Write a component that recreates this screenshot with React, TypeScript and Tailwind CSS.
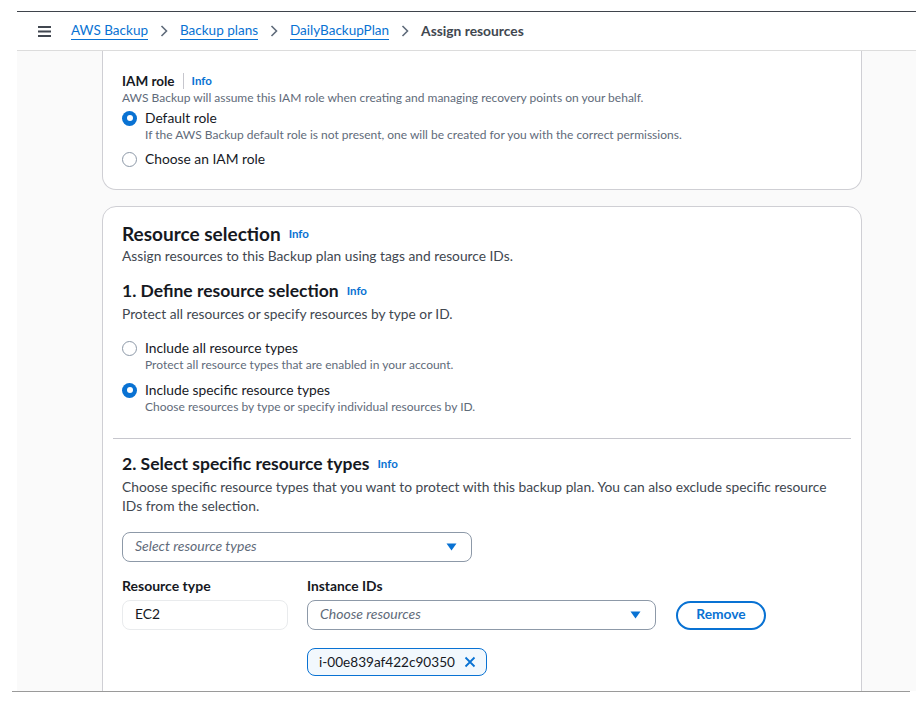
import React from 'react';

const blue = 'text-[#0972d3]';

function Info({ sep = false }: { sep?: boolean }) {
  return (
    <span className="inline-flex items-center">
      {sep && <span className="mx-[8px] block h-[16px] w-px bg-[#c6c6cd]" />}
      <span className={`text-[11.5px] font-bold ${blue} ${sep ? '' : 'ml-[8px]'}`}>Info</span>
    </span>
  );
}

function Radio({ on }: { on: boolean }) {
  if (on) {
    return (
      <span className="flex h-[15px] w-[15px] shrink-0 items-center justify-center rounded-full bg-[#0972d3]">
        <span className="block h-[6px] w-[6px] rounded-full bg-white" />
      </span>
    );
  }
  return <span className="block h-[15px] w-[15px] shrink-0 rounded-full border-[1.5px] border-[#8d99a8] bg-white" />;
}

function Caret() {
  return (
    <svg width="11" height="8" viewBox="0 0 11 8">
      <path d="M0.5 0.5 L10.5 0.5 L5.5 7.5 Z" fill="#0972d3" />
    </svg>
  );
}

function Chevron() {
  return (
    <svg width="8" height="12" viewBox="0 0 8 12" className="mx-[12px]">
      <path d="M1.5 1 L6.5 6 L1.5 11" fill="none" stroke="#5f6b7a" strokeWidth="1.6" />
    </svg>
  );
}

function Crumb({ label }: { label: string }) {
  return (
    <span className={`${blue} border-b border-[#0972d3] leading-[17px] text-[13.5px]`}>{label}</span>
  );
}

function RadioOption({ on, label, desc, className = '' }: { on: boolean; label: string; desc?: string; className?: string }) {
  return (
    <div className={className}>
      <div className="flex h-[18px] items-center">
        <span className="mr-[8px] block">
          <Radio on={on} />
        </span>
        <span className="text-[13.8px] leading-[18px] text-[#16191f]">{label}</span>
      </div>
      {desc && (
        <p className="mt-[1px] pl-[23px] text-[12px] leading-[14px] text-[#5f6b7a]">{desc}</p>
      )}
    </div>
  );
}

export default function App() {
  return (
    <div className="relative h-[705px] w-[916px] overflow-hidden bg-white font-['Lato','Open_Sans',sans-serif] text-[#16191f]">
      <div className="h-[11px]" />
      <div className="ml-[17px] border-t border-[#3f444c]" />

      {/* breadcrumbs */}
      <header className="ml-[17px] flex h-[39px] items-center border-b border-[#dcdcdc] bg-white pl-[21px]">
        <svg width="13" height="11" viewBox="0 0 13 11" className="mr-[20px]">
          <rect x="0" y="0" width="13" height="2" fill="#414750" />
          <rect x="0" y="4.5" width="13" height="2" fill="#414750" />
          <rect x="0" y="9" width="13" height="2" fill="#414750" />
        </svg>
        <Crumb label="AWS Backup" />
        <Chevron />
        <Crumb label="Backup plans" />
        <Chevron />
        <Crumb label="DailyBackupPlan" />
        <Chevron />
        <span className="text-[13.8px] font-bold text-[#414750]">Assign resources</span>
      </header>

      <main className="ml-[17px] h-[640px] overflow-hidden bg-[#fafafa] pl-[85px]">
        {/* IAM role card */}
        <section className="w-[760px] rounded-b-[14px] border border-t-0 border-[#cfcfd4] bg-white px-[19px] pb-[21px] pt-[22px]">
          <div className="flex h-[16px] items-center">
            <span className="text-[13.5px] font-bold leading-[16px]">IAM role</span>
            <Info sep />
          </div>
          <p className="mt-[2px] text-[12px] leading-[14px] text-[#5f6b7a]">
            AWS Backup will assume this IAM role when creating and managing recovery points on your behalf.
          </p>
          <RadioOption
            on
            className="mt-[4px]"
            label="Default role"
            desc="If the AWS Backup default role is not present, one will be created for you with the correct permissions."
          />
          <RadioOption on={false} className="mt-[8px]" label="Choose an IAM role" />
        </section>

        {/* resource selection card */}
        <section className="mt-[16px] h-[520px] w-[760px] rounded-[14px] border border-[#cfcfd4] bg-white pt-[16px]">
          <div className="px-[19px]">
            <div className="flex h-[22px] items-center">
              <h2 className="text-[19px] font-bold leading-[22px]">Resource selection</h2>
              <Info />
            </div>
            <p className="mt-[2px] text-[13.75px] leading-[18px] text-[#414750]">
              Assign resources to this Backup plan using tags and resource IDs.
            </p>

            <div className="mt-[16px] flex h-[20px] items-center">
              <h3 className="text-[17.5px] font-bold leading-[20px]">1. Define resource selection</h3>
              <Info />
            </div>
            <p className="mt-[4px] text-[13.75px] leading-[18px] text-[#414750]">
              Protect all resources or specify resources by type or ID.
            </p>

            <RadioOption
              on={false}
              className="mt-[16px]"
              label="Include all resource types"
              desc="Protect all resource types that are enabled in your account."
            />
            <RadioOption
              on
              className="mt-[9px]"
              label="Include specific resource types"
              desc="Choose resources by type or specify individual resources by ID."
            />
          </div>

          <div className="mx-[10px] mt-[24px] border-t border-[#c6c6cd]" />

          <div className="px-[19px]">
            <div className="mt-[15px] flex h-[20px] items-center">
              <h3 className="text-[17.5px] font-bold leading-[20px]">2. Select specific resource types</h3>
              <Info />
            </div>
            <p className="mt-[3px] max-w-[712px] text-[13.8px] leading-[19px] text-[#414750]">
              Choose specific resource types that you want to protect with this backup plan. You can also exclude specific resource IDs from the selection.
            </p>

            <div className="mt-[17px] flex h-[30px] w-[350px] items-center justify-between rounded-[8px] border border-[#8d99a8] pl-[12px] pr-[14px]">
              <span className="pb-[3px] text-[14px] italic text-[#5f6b7a]">Select resource types</span>
              <Caret />
            </div>

            <div className="mt-[16px] flex gap-[19px]">
              <div className="w-[166px]">
                <div className="text-[14px] font-bold leading-[16px]">Resource type</div>
                <div className="mt-[6px] flex h-[30px] items-center rounded-[8px] border border-[#e9ebed] pb-[2px] pl-[12px] text-[13.8px]">
                  EC2
                </div>
              </div>
              <div>
                <div className="text-[13.8px] font-bold leading-[16px]">Instance IDs</div>
                <div className="mt-[6px] flex items-center gap-[20px]">
                  <div className="flex h-[30px] w-[349px] items-center justify-between rounded-[8px] border border-[#8d99a8] pl-[12px] pr-[14px]">
                    <span className="pb-[3px] text-[14px] italic text-[#5f6b7a]">Choose resources</span>
                    <Caret />
                  </div>
                  <button className="flex h-[29px] w-[90px] items-center justify-center rounded-full border-2 border-[#0972d3] pb-[2px] text-[13.8px] font-bold text-[#0972d3]">
                    Remove
                  </button>
                </div>
                <div className="mt-[18px] flex h-[28px] w-[180px] items-center justify-between rounded-[8px] border border-[#0972d3] bg-[#f2f8fd] pl-[11px] pr-[10px]">
                  <span className="text-[13.6px]">i-00e839af422c90350</span>
                  <svg width="12" height="12" viewBox="0 0 12 12">
                    <path d="M1.5 1.5 L10.5 10.5 M10.5 1.5 L1.5 10.5" stroke="#0972d3" strokeWidth="1.8" />
                  </svg>
                </div>
              </div>
            </div>
          </div>
        </section>
      </main>

      <div className="ml-[12px] w-[898px] border-t border-[#9a9a9a]" />
    </div>
  );
}
